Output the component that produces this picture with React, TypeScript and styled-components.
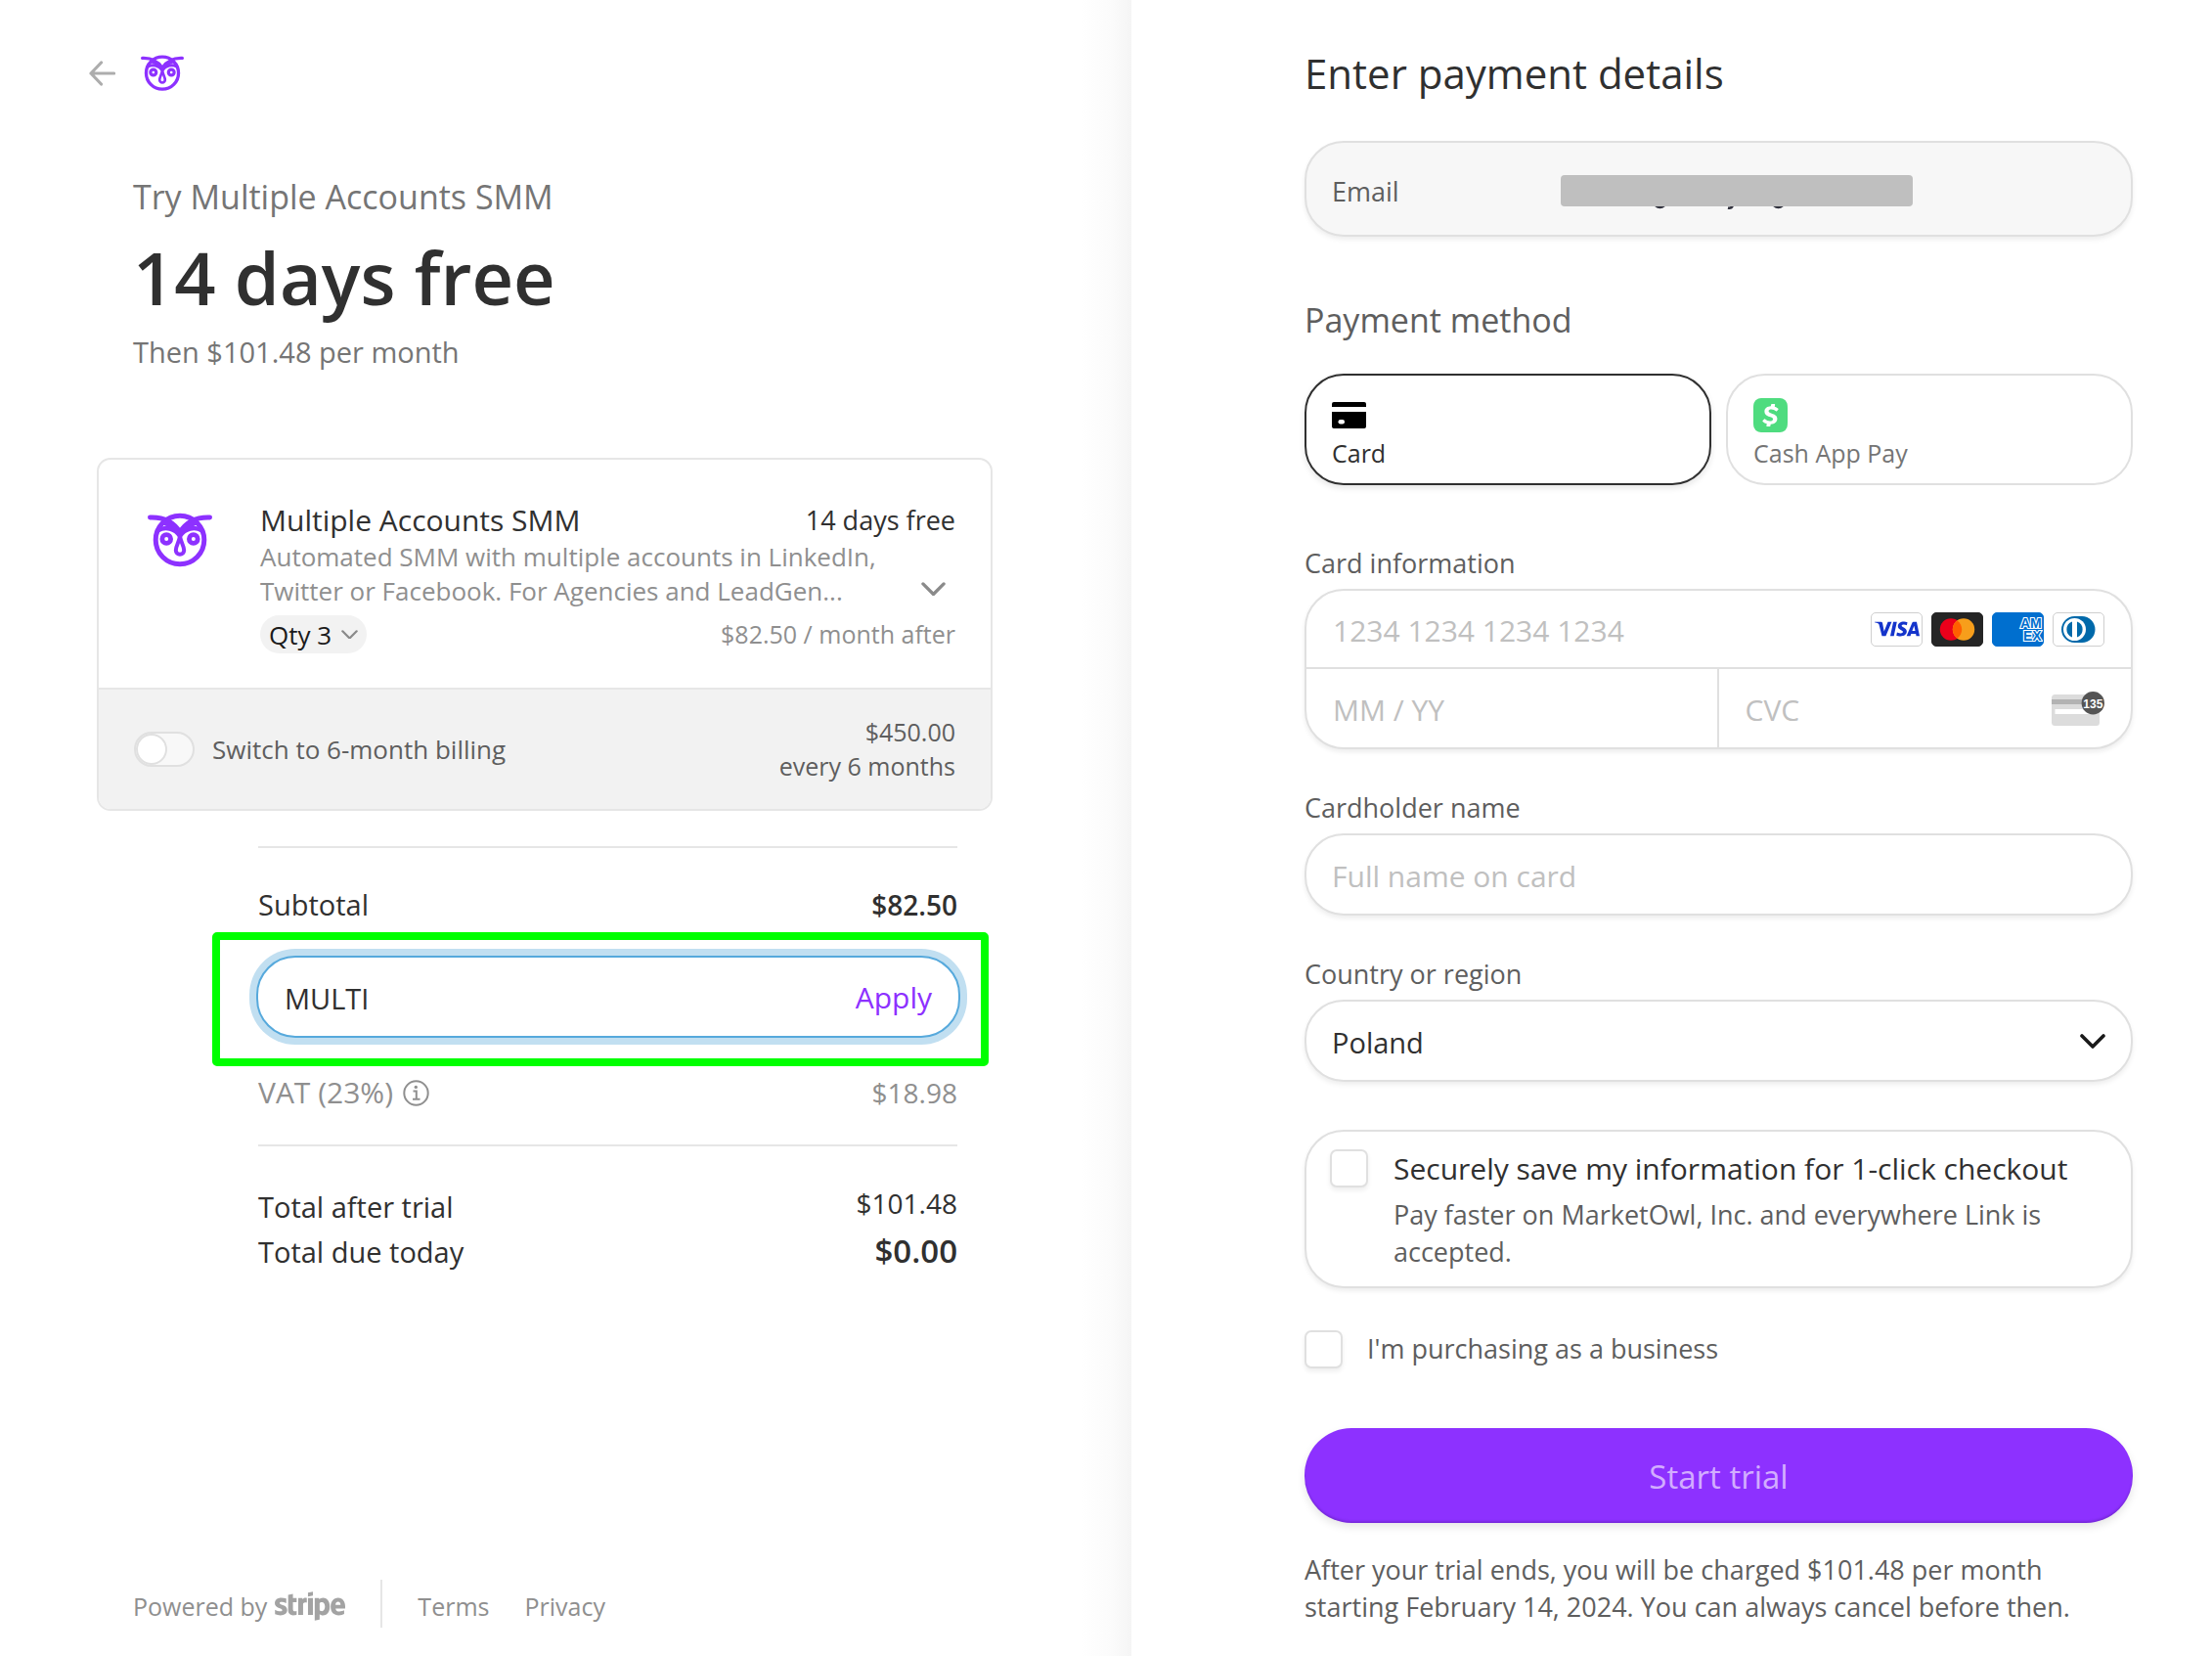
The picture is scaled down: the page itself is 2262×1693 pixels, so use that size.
import React from "react";
import styled, { createGlobalStyle, css } from "styled-components";
import { FaStripe } from "react-icons/fa";
import { SiCashapp, SiVisa } from "react-icons/si";

const ink = "#30313d";
const dark = "#303030";
const mid = "#5e5e5e";
const soft = "#757575";
const faint = "#8f8f8f";
const line = "#e6e6e6";
const fieldLine = "#e0e0e0";
const accent = "#8d31ff";

const GlobalStyle = createGlobalStyle`
  *, *::before, *::after { box-sizing: border-box; }
  body {
    margin: 0;
    background: #fff;
    color: ${dark};
    font-family: "Open Sans", "Noto Sans", sans-serif;
    font-size: 30px;
    line-height: 40px;
  }
  h1, h2, p, dl, dd, dt, fieldset { margin: 0; padding: 0; border: 0; font: inherit; }
  button, input, select { font: inherit; color: inherit; margin: 0; }
  button { background: none; border: 0; padding: 0; cursor: pointer; }
  a { color: inherit; text-decoration: none; }
  svg { display: block; flex: none; }
`;

const Page = styled.div`
  display: grid;
  grid-template-columns: minmax(0, 1157fr) minmax(0, 1105fr);
  min-height: 100vh;
`;

const Summary = styled.section`
  display: flex;
  flex-direction: column;
  padding: 56px 142px 29px 99px;
  background: linear-gradient(to left, #f5f5f5, #fbfbfb 20px, #fff 52px);
`;

const Payment = styled.main`
  padding: 47px 81px 31px 177px;
  background: #fff;
`;

/* Summary side */

const Header = styled.header`
  display: flex;
  align-items: center;
  gap: 26px;
  height: 38px;
  margin: 0 -8px;
`;

const Intro = styled.div`
  margin-top: 82px;
  padding-left: 37px;
  color: ${soft};
`;

const IntroTitle = styled.h1`
  font-size: 34px;
  line-height: 50px;
`;

const Headline = styled.p`
  margin-top: 10px;
  color: ${dark};
  font-size: 74px;
  line-height: 96px;
  font-weight: 600;
`;

const IntroNote = styled.p`
  margin-top: 8px;
  font-size: 29px;
`;

const PlanCard = styled.div`
  margin-top: 88px;
  border: 2px solid ${line};
  border-radius: 14px;
  overflow: hidden;
`;

const Product = styled.div`
  display: flex;
  gap: 49px;
  padding: 42px 36px 35px 50px;
`;

const ProductImage = styled.div`
  padding-top: 12px;
`;

const ProductBody = styled.div`
  flex: 1;
  min-width: 0;
`;

const SplitRow = styled.div<{ $align?: string }>`
  display: flex;
  justify-content: space-between;
  align-items: ${(p) => p.$align ?? "center"};
`;

const ProductPrice = styled.span`
  font-size: 27px;
`;

const Small = styled.div<{ $color?: string }>`
  color: ${(p) => p.$color ?? mid};
  font-size: 26px;
  line-height: 35px;
`;

const SmallPrice = styled(Small)`
  margin-left: auto;
  font-size: 25px;
  text-align: right;
`;

const Description = styled(Small)`
  max-width: 640px;
`;

const ExpandButton = styled.button`
  display: flex;
  align-items: center;
  height: 40px;
  padding: 0 10px;
`;

const QtyButton = styled.button`
  display: flex;
  align-items: center;
  gap: 10px;
  height: 39px;
  padding: 0 9px;
  border-radius: 20px;
  background: #f2f2f2;
  color: #1a1a1a;
  font-size: 26px;
`;

const QtyRow = styled(SplitRow)`
  margin-top: 7px;
`;

const Upsell = styled.div`
  display: flex;
  align-items: center;
  gap: 18px;
  padding: 26px 36px;
  border-top: 2px solid ${line};
  background: #f2f2f2;
`;

const Toggle = styled.input`
  appearance: none;
  display: flex;
  width: 62px;
  height: 36px;
  border: 2px solid ${fieldLine};
  border-radius: 18px;
  background: #f8f8f8;

  &::before {
    content: "";
    width: 32px;
    height: 32px;
    border: 2px solid ${fieldLine};
    border-radius: 50%;
    background: #fff;
  }
  &:checked { justify-content: flex-end; background: ${accent}; }
`;

const Totals = styled.div`
  margin: 36px 36px 0 165px;
  font-size: 29px;
`;

const TotalsGroup = styled.dl<{ $top: number }>`
  display: grid;
  gap: 5px;
  padding-top: ${(p) => p.$top}px;
  border-top: 2px solid ${line};
`;

const Amount = styled.dd<{ $strong?: boolean; $raised?: boolean; $large?: boolean }>`
  font-size: ${(p) => (p.$large ? 33 : 28)}px;
  ${(p) => p.$strong && css`font-weight: 600;`}
  ${(p) => p.$raised && css`line-height: 32px;`}
`;

const PromoArea = styled.div`
  position: relative;
  margin: 32px -3px 36px -2px;

  /* callout frame drawn over the promo field */
  &::after {
    content: "";
    position: absolute;
    inset: -24px -29px -29px -45px;
    border: 8px solid #00ff00;
    border-radius: 5px;
    pointer-events: none;
  }
`;

const PromoField = styled.form`
  display: flex;
  align-items: center;
  height: 84px;
  padding: 0 27px;
  border: 2px solid #56a9dc;
  border-radius: 40px;
  box-shadow: 0 0 0 7px #c1dff1;
  background: #fff;
`;

const BareInput = styled.input`
  flex: 1;
  min-width: 0;
  width: 100%;
  height: 100%;
  padding: 2px 0 0;
  border: 0;
  outline: 0;
  background: none;
  color: ${dark};

  &::placeholder { color: #c0c0c0; opacity: 1; }
`;

const ApplyButton = styled.button`
  padding-top: 2px;
  color: ${accent};
  font-size: 30px;
`;

const TaxRow = styled(SplitRow)`
  padding-bottom: 33px;
  color: ${faint};
`;

const TaxLabel = styled.dt`
  display: flex;
  align-items: center;
  gap: 10px;
  font-size: 30px;
`;

const TaxList = styled.dl`
  display: block;
`;

const Footer = styled.footer`
  display: flex;
  align-items: center;
  gap: 36px;
  margin-top: auto;
  padding-left: 37px;
  color: ${faint};
  font-size: 25px;
  line-height: 43px;
`;

const FooterLink = styled.a`
  padding-top: 6px;
`;

const Powered = styled(FooterLink)`
  display: flex;
  align-items: center;
  gap: 8px;
  padding-right: 36px;
  border-right: 2px solid ${line};
`;

const StripeMark = styled(FaStripe)`
  width: 72px;
  height: 58px;
  margin: -9px 0 -7px;
  color: #a3a3a3;
`;

/* Payment side */

const Title = styled.h2`
  color: ${dark};
  font-size: 42px;
  line-height: 56px;
`;

const Heading = styled.h2`
  margin-top: 60px;
  color: ${mid};
  font-size: 34px;
  line-height: 50px;
`;

const Form = styled.form`
  display: block;
`;

const box = css`
  border: 2px solid ${fieldLine};
  border-radius: 40px;
  background: #fff;
  box-shadow: 0 3px 5px rgba(0, 0, 0, 0.07);
`;

const EmailBox = styled.div`
  ${box}
  display: grid;
  grid-template-columns: 234px 1fr;
  align-items: center;
  height: 98px;
  margin-top: 41px;
  padding: 6px 26px 0;
  background: #f7f7f7;
  color: ${mid};
  font-size: 27px;
`;

const Redacted = styled.svg`
  width: 360px;
  height: 35px;
`;

const Tiles = styled.div`
  display: grid;
  grid-template-columns: 1fr 1fr;
  gap: 15px;
  margin-top: 30px;
`;

const Tile = styled.button<{ $selected?: boolean }>`
  ${box}
  display: flex;
  flex-direction: column;
  align-items: flex-start;
  height: 114px;
  padding: 19px 26px 13px;
  color: ${soft};
  font-size: 25px;
  line-height: 35px;
  box-shadow: none;
  ${(p) =>
    p.$selected &&
    css`
      border-color: ${dark};
      color: ${dark};
      box-shadow: 0 3px 6px rgba(0, 0, 0, 0.1);
    `}
`;

const TileIcon = styled.span`
  display: flex;
  align-items: center;
  height: 43px;
`;

const Groups = styled.div`
  display: grid;
  gap: 39px;
  margin-top: 59px;
`;

const Group = styled.div`
  display: grid;
  gap: 5px;
`;

const Label = styled.label`
  color: ${mid};
  font-size: 27px;
  line-height: 42px;
`;

const CardBox = styled.div`
  ${box}
  display: grid;
  grid-template-columns: 1fr 1fr;
  grid-template-rows: 80px 80px;
`;

const Cell = styled.div<{ $wide?: boolean; $divided?: boolean }>`
  display: flex;
  align-items: center;
  padding: 0 27px;
  ${(p) => p.$wide && css`grid-column: 1 / -1; border-bottom: 2px solid ${fieldLine};`}
  ${(p) => p.$divided && css`border-right: 2px solid ${fieldLine};`}
`;

const Brands = styled.div`
  display: flex;
  gap: 9px;
`;

const Brand = styled.span<{ $fill?: string }>`
  display: flex;
  align-items: center;
  justify-content: center;
  width: 53px;
  height: 35px;
  border: 1px solid ${(p) => p.$fill ?? "#cfcfcf"};
  border-radius: 5px;
  background: ${(p) => p.$fill ?? "#fff"};
  overflow: hidden;
`;

const Field = styled.div`
  ${box}
  display: flex;
  align-items: center;
  height: 84px;
  padding: 0 26px;
`;

const Select = styled.select`
  flex: 1;
  height: 100%;
  padding: 4px 0 0;
  border: 0;
  outline: 0;
  appearance: none;
  background: none;
  font-size: 29px;
`;

const LinkBox = styled.div`
  ${box}
  display: flex;
  gap: 26px;
  margin-top: 49px;
  padding: 18px 24px 16px;
`;

const Checkbox = styled.input`
  appearance: none;
  flex: none;
  width: 39px;
  height: 39px;
  border: 2px solid ${fieldLine};
  border-radius: 7px;
  background: #fff;
  box-shadow: 0 3px 5px rgba(0, 0, 0, 0.07);

  &:checked { background: ${accent}; }
`;

const LinkText = styled.div`
  flex: 1;
`;

const Fine = styled.p`
  color: ${mid};
  font-size: 27px;
  line-height: 38px;
`;

const LinkNote = styled(Fine)`
  margin-top: 8px;
`;

const BusinessRow = styled.div`
  display: flex;
  gap: 25px;
  margin-top: 43px;
`;

const BusinessLabel = styled(Label)`
  line-height: 38px;
`;

const Submit = styled.button`
  display: block;
  width: 100%;
  height: 97px;
  margin: 61px 0 29px;
  padding-top: 2px;
  border-radius: 48px;
  background: ${accent};
  color: #d2adff;
  font-size: 33px;
  box-shadow: inset 0 -2px 2px rgba(60, 20, 120, 0.25), 0 4px 8px rgba(0, 0, 0, 0.1);
`;

/* Drawings */

const Owl = ({ width }: { width: number }) => (
  <svg width={width} height={(width * 56) / 66} viewBox="0 0 66 56" fill="none" stroke={accent} strokeWidth="5" strokeLinecap="round" aria-hidden="true">
    <circle cx="33" cy="28" r="24.8" />
    <path d="M2.5 5C15 4.500 26 9 33 20C40 9 51 4.500 63.500 5" />
    <path d="M10.500 18.500C18 13.500 28 16.500 33 24C38 16.500 48 13.500 55.500 18.500" strokeWidth="4.500" />
    <path d="M17 10.500C23 12.500 29 16 33 22C37 16 43 12.500 49 10.500" />
    <circle cx="19.200" cy="27" r="4.400" strokeWidth="4.800" />
    <circle cx="46.800" cy="27" r="4.400" strokeWidth="4.800" />
    <path d="M33 24C32 31 28.800 34 28.800 38.500A4.200 4.200 0 0 0 37.200 38.500C37.200 34 34 31 33 24Z" strokeWidth="4" strokeLinejoin="round" />
  </svg>
);

const BackArrow = () => (
  <svg width="27" height="26" viewBox="0 0 27 26" fill="none" stroke="#adadad" strokeWidth="3.200" strokeLinecap="round" strokeLinejoin="round" aria-hidden="true">
    <path d="M25.500 13H2M12.500 2L2 13L12.500 24" />
  </svg>
);

const Chevron = ({ width, stroke, weight }: { width: number; stroke: string; weight: number }) => (
  <svg width={width} height={(width * 15) / 26} viewBox="0 0 26 15" fill="none" stroke={stroke} strokeWidth={weight} strokeLinecap="round" strokeLinejoin="round" aria-hidden="true">
    <path d="M2 2L13 13L24 2" />
  </svg>
);

const InfoIcon = () => (
  <svg width="27" height="27" viewBox="0 0 27 27" fill="none" stroke={faint} strokeWidth="2" aria-hidden="true">
    <circle cx="13.500" cy="13.500" r="12.200" />
    <path d="M10.500 11.500H13.800V19.500M10 19.700H17.500" />
    <circle cx="13.300" cy="7.400" r="1.700" fill={faint} stroke="none" />
  </svg>
);

const CardIcon = () => (
  <svg width="35" height="27" viewBox="0 0 35 27" aria-hidden="true">
    <path d="M0 5V2Q0 0 2 0H33Q35 0 35 2V5ZM0 10H35V25Q35 27 33 27H2Q0 27 0 25Z" fill="#000" />
    <rect x="6.500" y="18" width="6.500" height="4.500" rx="2.200" fill="#fff" />
  </svg>
);

const Mastercard = () => (
  <svg width="53" height="35" viewBox="0 0 53 35" aria-hidden="true">
    <circle cx="20" cy="17.500" r="11.200" fill="#eb001b" />
    <circle cx="33" cy="17.500" r="11.200" fill="#f79e1b" />
    <path d="M26.500 8.400A11.200 11.200 0 0 1 26.500 26.600A11.200 11.200 0 0 1 26.500 8.400Z" fill="#ff5f00" />
  </svg>
);

const Amex = () => (
  <svg width="53" height="35" viewBox="0 0 53 35" aria-hidden="true">
    <g fontFamily="Liberation Sans, sans-serif" fontWeight="bold" fontSize="14" fill="#006fcf" stroke="#fff" strokeWidth="2.200" paintOrder="stroke">
      <text x="29" y="16">AM</text>
      <text x="32" y="29">EX</text>
    </g>
  </svg>
);

const Diners = () => (
  <svg width="53" height="35" viewBox="0 0 53 35" aria-hidden="true">
    <path d="M22.500 4H30A13.200 13.200 0 0 1 30 31H22.500A13.200 13.200 0 0 1 22.500 4Z" fill="#0069aa" />
    <circle cx="22.500" cy="17.500" r="11.500" fill="#fff" />
    <path d="M20 9.500V25.500A8.500 8.500 0 0 1 20 9.500ZM25 9.500V25.500A8.500 8.500 0 0 0 25 9.500Z" fill="#0069aa" />
  </svg>
);

const CvcIcon = () => (
  <svg width="54" height="35" viewBox="0 0 54 35" aria-hidden="true">
    <rect y="3" width="49" height="32" rx="3.500" fill="#dcdcdc" />
    <rect y="8" width="49" height="5" fill="#b3b3b3" />
    <rect x="3.500" y="18" width="41" height="5" fill="#fff" />
    <circle cx="42.300" cy="11.800" r="11.700" fill="#545454" />
    <text x="42.300" y="16.500" textAnchor="middle" fontFamily="Liberation Sans, sans-serif" fontWeight="bold" fontSize="12" fill="#fff">135</text>
  </svg>
);

const EmailRedaction = () => (
  <Redacted viewBox="0 0 360 35" role="img" aria-label="Email hidden">
    <path d="M97 31Q101.500 35 106 31M171 33.500Q174.500 34.500 176 31M218 31Q222.500 35 227 31" fill="none" stroke={ink} strokeWidth="2.500" />
    <rect width="360" height="32" rx="4" fill="#bfbfbf" />
  </Redacted>
);

const SummaryPane = () => (
  <Summary>
    <Header>
      <button type="button" aria-label="Back"><BackArrow /></button>
      <Owl width={44} />
    </Header>
    <Intro>
      <IntroTitle>Try Multiple Accounts SMM</IntroTitle>
      <Headline>14 days free</Headline>
      <IntroNote>Then $101.48 per month</IntroNote>
    </Intro>
    <PlanCard>
      <Product>
        <ProductImage><Owl width={66} /></ProductImage>
        <ProductBody>
          <SplitRow>
            <span>Multiple Accounts SMM</span>
            <ProductPrice>14 days free</ProductPrice>
          </SplitRow>
          <SplitRow $align="flex-end">
            <Description $color={faint}>
              Automated SMM with multiple accounts in LinkedIn, Twitter or Facebook. For Agencies and LeadGen...
            </Description>
            <ExpandButton type="button" aria-label="Show full description">
              <Chevron width={25} stroke="#8a8a8a" weight={3.4} />
            </ExpandButton>
          </SplitRow>
          <QtyRow>
            <QtyButton type="button">
              Qty 3 <Chevron width={17} stroke="#8a8a8a" weight={3.4} />
            </QtyButton>
            <SmallPrice $color={faint}>$82.50 / month after</SmallPrice>
          </QtyRow>
        </ProductBody>
      </Product>
      <Upsell>
        <Toggle type="checkbox" role="switch" id="billing" />
        <Small as="label" htmlFor="billing">Switch to 6-month billing</Small>
        <SmallPrice>$450.00<br />every 6 months</SmallPrice>
      </Upsell>
    </PlanCard>
    <Totals>
      <TotalsGroup $top={38}>
        <SplitRow>
          <dt>Subtotal</dt>
          <Amount $strong>$82.50</Amount>
        </SplitRow>
      </TotalsGroup>
      <PromoArea>
        <PromoField onSubmit={(e) => e.preventDefault()}>
          <BareInput aria-label="Promotion code" defaultValue="MULTI" />
          <ApplyButton>Apply</ApplyButton>
        </PromoField>
      </PromoArea>
      <TaxList>
        <TaxRow>
          <TaxLabel>VAT (23%) <InfoIcon /></TaxLabel>
          <Amount>$18.98</Amount>
        </TaxRow>
      </TaxList>
      <TotalsGroup $top={42}>
        <SplitRow $align="flex-start">
          <dt>Total after trial</dt>
          <Amount $raised>$101.48</Amount>
        </SplitRow>
        <SplitRow $align="baseline">
          <dt>Total due today</dt>
          <Amount $strong $large>$0.00</Amount>
        </SplitRow>
      </TotalsGroup>
    </Totals>
    <Footer>
      <Powered href="#stripe" aria-label="Powered by stripe">Powered by <StripeMark /></Powered>
      <FooterLink href="#terms">Terms</FooterLink>
      <FooterLink href="#privacy">Privacy</FooterLink>
    </Footer>
  </Summary>
);

const PaymentPane = () => (
  <Payment>
    <Form onSubmit={(e) => e.preventDefault()}>
      <Title>Enter payment details</Title>
      <EmailBox>
        <span>Email</span>
        <EmailRedaction />
      </EmailBox>
      <Heading>Payment method</Heading>
      <Tiles>
        <Tile type="button" $selected>
          <TileIcon><CardIcon /></TileIcon>
          Card
        </Tile>
        <Tile type="button">
          <TileIcon><SiCashapp size={35} color="#4fdc7f" /></TileIcon>
          Cash App Pay
        </Tile>
      </Tiles>
      <Groups>
        <Group>
          <Label htmlFor="number">Card information</Label>
          <CardBox>
            <Cell $wide>
              <BareInput id="number" placeholder="1234 1234 1234 1234" />
              <Brands>
                <Brand><SiVisa size={46} color="#1434cb" /></Brand>
                <Brand $fill="#252525"><Mastercard /></Brand>
                <Brand $fill="#006fcf"><Amex /></Brand>
                <Brand><Diners /></Brand>
              </Brands>
            </Cell>
            <Cell $divided><BareInput aria-label="Expiration" placeholder="MM / YY" /></Cell>
            <Cell>
              <BareInput aria-label="CVC" placeholder="CVC" />
              <CvcIcon />
            </Cell>
          </CardBox>
        </Group>
        <Group>
          <Label htmlFor="name">Cardholder name</Label>
          <Field><BareInput id="name" placeholder="Full name on card" /></Field>
        </Group>
        <Group>
          <Label htmlFor="country">Country or region</Label>
          <Field>
            <Select id="country" defaultValue="PL">
              <option value="PL">Poland</option>
            </Select>
            <Chevron width={26} stroke="#1a1a1a" weight={3.6} />
          </Field>
        </Group>
      </Groups>
      <LinkBox>
        <Checkbox type="checkbox" id="save" />
        <LinkText>
          <label htmlFor="save">Securely save my information for 1-click checkout</label>
          <LinkNote>Pay faster on MarketOwl, Inc. and everywhere Link is accepted.</LinkNote>
        </LinkText>
      </LinkBox>
      <BusinessRow>
        <Checkbox type="checkbox" id="business" />
        <BusinessLabel htmlFor="business">I'm purchasing as a business</BusinessLabel>
      </BusinessRow>
      <Submit type="submit">Start trial</Submit>
      <Fine>
        After your trial ends, you will be charged $101.48 per month starting February 14, 2024. You can always cancel before then.
      </Fine>
    </Form>
  </Payment>
);

export default function App() {
  return (
    <Page>
      <GlobalStyle />
      <SummaryPane />
      <PaymentPane />
    </Page>
  );
}
